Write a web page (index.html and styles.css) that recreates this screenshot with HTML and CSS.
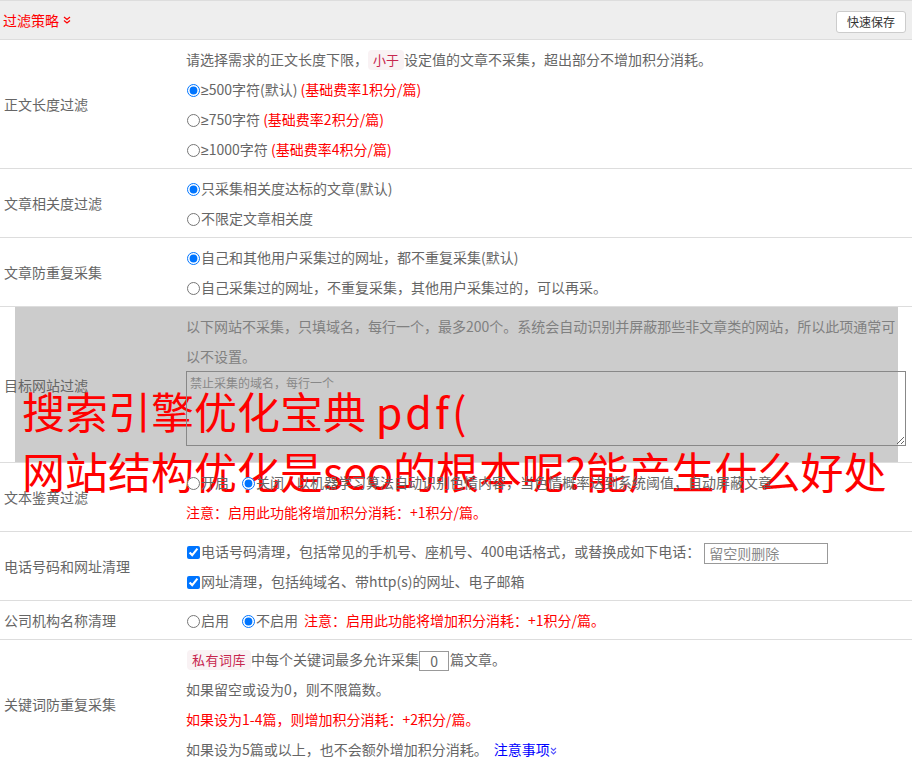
FILE: index.html
```html
<!DOCTYPE html>
<html lang="zh-CN">
<head>
<meta charset="utf-8">
<title>过滤策略</title>
<link rel="stylesheet" href="styles.css">
</head>
<body>
<div class="page">
  <div class="head">
    <div class="head-title">过滤策略
      <svg class="chev" width="8" height="8" viewBox="0 0 8 8"><path d="M1 1 L4 3.5 L7 1 M1 4.5 L4 7 L7 4.5" fill="none" stroke="#f00" stroke-width="1.2"/></svg>
    </div>
    <button class="btn">快速保存</button>
  </div>

  <div class="row">
    <div class="label">正文长度过滤</div>
    <div class="content">
      <div class="line">请选择需求的正文长度下限，<span class="tag">小于</span>设定值的文章不采集，超出部分不增加积分消耗。</div>
      <div class="line"><label><input type="radio" name="len" checked><span class="ge">≥</span>500字符(默认)</label> <span class="red">(基础费率1积分/篇)</span></div>
      <div class="line"><label><input type="radio" name="len"><span class="ge">≥</span>750字符</label> <span class="red">(基础费率2积分/篇)</span></div>
      <div class="line"><label><input type="radio" name="len"><span class="ge">≥</span>1000字符</label> <span class="red">(基础费率4积分/篇)</span></div>
    </div>
  </div>

  <div class="row">
    <div class="label">文章相关度过滤</div>
    <div class="content">
      <div class="line"><label><input type="radio" name="rel" checked>只采集相关度达标的文章(默认)</label></div>
      <div class="line"><label><input type="radio" name="rel">不限定文章相关度</label></div>
    </div>
  </div>

  <div class="row">
    <div class="label">文章防重复采集</div>
    <div class="content">
      <div class="line"><label><input type="radio" name="dup" checked>自己和其他用户采集过的网址，都不重复采集(默认)</label></div>
      <div class="line"><label><input type="radio" name="dup">自己采集过的网址，不重复采集，其他用户采集过的，可以再采。</label></div>
    </div>
  </div>

  <div class="row row-masked">
    <div class="mask"></div>
    <div class="label">目标网站过滤</div>
    <div class="content content-tall">
      <div class="line dim">以下网站不采集，只填域名，每行一个，最多200个。系统会自动识别并屏蔽那些非文章类的网站，所以此项通常可以不设置。</div>
      <textarea class="area" placeholder="禁止采集的域名，每行一个"></textarea>
    </div>
  </div>

  <div class="row">
    <div class="label">文本鉴黄过滤</div>
    <div class="content">
      <div class="line"><label class="opt"><input type="radio" name="porn">开启</label><label class="opt"><input type="radio" name="porn" checked>关闭</label>以机器学习算法自动识别色情内容，当色情概率达到系统阈值，自动屏蔽文章</div>
      <div class="line red">注意：启用此功能将增加积分消耗：+1积分/篇。</div>
    </div>
  </div>

  <div class="row">
    <div class="label">电话号码和网址清理</div>
    <div class="content">
      <div class="line"><label><input type="checkbox" checked>电话号码清理，包括常见的手机号、座机号、400电话格式，或替换成如下电话：</label><input class="phone" type="text" placeholder="留空则删除"></div>
      <div class="line"><label><input type="checkbox" checked>网址清理，包括纯域名、带http(s)的网址、电子邮箱</label></div>
    </div>
  </div>

  <div class="row">
    <div class="label">公司机构名称清理</div>
    <div class="content">
      <div class="line"><label class="opt"><input type="radio" name="org">启用</label><label class="opt opt-last"><input type="radio" name="org" checked>不启用</label><span class="red">注意：启用此功能将增加积分消耗：+1积分/篇。</span></div>
    </div>
  </div>

  <div class="row">
    <div class="label">关键词防重复采集</div>
    <div class="content">
      <div class="line"><span class="tag tag-wide">私有词库</span>中每个关键词最多允许采集<input class="num" type="text" value="0">篇文章。</div>
      <div class="line">如果留空或设为0，则不限篇数。</div>
      <div class="line red">如果设为1-4篇，则增加积分消耗：+2积分/篇。</div>
      <div class="line">如果设为5篇或以上，也不会额外增加积分消耗。<a class="link" href="#">注意事项<svg class="chev" width="7" height="8" viewBox="0 0 7 8"><path d="M1 1 L3.5 3.5 L6 1 M1 4.5 L3.5 7 L6 4.5" fill="none" stroke="#55f" stroke-width="1.1"/></svg></a></div>
    </div>
  </div>

  <h1 class="banner">搜索引擎优化宝典 <span class="latin">pdf(</span><br>网站结构优化是seo的根本呢?能产生什么好处</h1>
</div>
</body>
</html>
```

FILE: styles.css
```css
html, body {
  margin: 0;
  padding: 0;
  background: #fff;
}
.page {
  position: relative;
  width: 912px;
  font-family: "Microsoft YaHei", "Noto Sans CJK SC", sans-serif;
  font-size: 14px;
  color: #666;
}
.head {
  height: 38px;
  border-top: 1px solid #ddd;
  border-bottom: 1px solid #ddd;
  background: #eee;
  display: flex;
  align-items: center;
  justify-content: space-between;
  padding: 0 6px 0 3px;
}
.head-title {
  color: #f00;
  font-size: 14px;
  display: flex;
  align-items: center;
  gap: 4px;
}
.chev {
  display: inline-block;
}
.btn {
  height: 22px;
  padding: 0 10px;
  margin-top: 3px;
  border: 1px solid #ccc;
  border-radius: 3px;
  background: #fff;
  color: #333;
  font-family: inherit;
  font-size: 12px;
  line-height: 20px;
}
.row {
  position: relative;
  display: grid;
  grid-template-columns: 186px 1fr;
  border-bottom: 1px solid #ddd;
}
.label {
  position: relative;
  z-index: 1;
  display: flex;
  align-items: center;
  padding-left: 4px;
  color: #666;
}
.content {
  position: relative;
  z-index: 1;
  padding: 4px 6px 4px 0;
}
.content-tall {
  padding-bottom: 16px;
}
.line {
  height: 30px;
  line-height: 30px;
  white-space: nowrap;
}
.line.dim {
  height: auto;
  white-space: normal;
  color: #808080;
}
.mask {
  position: absolute;
  z-index: 0;
  left: 15px;
  right: 14px;
  top: 0;
  bottom: 0;
  background: #ccc;
}
.red {
  color: #f00;
}
.ge {
  font-family: "Liberation Sans", sans-serif;
  line-height: 1;
}
input[type="radio"],
input[type="checkbox"] {
  width: 13px;
  height: 13px;
  margin: 0 1px 0 1px;
  vertical-align: -2px;
}
.opt {
  margin-right: 12px;
}
.opt-last {
  margin-right: 6px;
}
.tag {
  display: inline-block;
  line-height: 20px;
  padding: 0 5px;
  font-size: 13px;
  color: #c7254e;
  background: #f9f2f4;
  border-radius: 4px;
}
.tag-wide {
  letter-spacing: 0.5px;
  margin-left: 1px;
}
.area {
  display: block;
  box-sizing: border-box;
  width: 720px;
  height: 75px;
  margin: 0;
  padding: 2px 3px;
  border: 1px solid #888;
  background: transparent;
  font-family: inherit;
  font-size: 12px;
  color: #666;
}
.area::placeholder {
  color: #888;
}
.phone {
  box-sizing: border-box;
  width: 124px;
  height: 21px;
  margin: 0 0 0 4px;
  padding: 0 4px;
  border: 1px solid #999;
  font-family: inherit;
  font-size: 14px;
  vertical-align: middle;
}
.phone::placeholder {
  color: #888;
}
.num {
  box-sizing: border-box;
  width: 30px;
  height: 20px;
  margin: 0 1px 0 0;
  padding: 0;
  border: 1px solid #999;
  text-align: center;
  font-family: inherit;
  font-size: 14px;
  color: #666;
  vertical-align: middle;
}
.link {
  margin-left: 6px;
  color: #00f;
  text-decoration: none;
}
.banner {
  position: absolute;
  left: 22px;
  top: 380px;
  margin: 0;
  font-family: "Microsoft YaHei", "Noto Sans CJK SC", sans-serif;
  font-weight: normal;
  font-size: 43px;
  line-height: 60px;
  color: #f00;
  white-space: nowrap;
}
.banner .latin {
  letter-spacing: 3px;
}
```
